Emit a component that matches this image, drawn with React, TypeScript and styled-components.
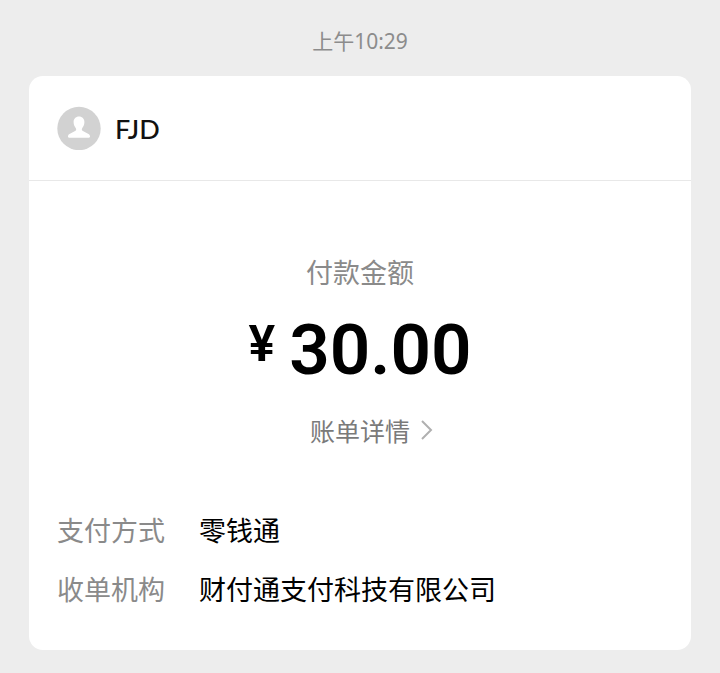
import React from "react";
import styled, { createGlobalStyle } from "styled-components";

const GlobalStyle = createGlobalStyle`
  * { box-sizing: border-box; }
  body {
    margin: 0;
    background: #ededed;
    color: #111;
    font-family: "Noto Sans CJK SC", "Noto Sans", sans-serif;
  }
`;

const Page = styled.main`
  min-height: 100vh;
  padding: 27px 29px 22px;
  display: flex;
  flex-direction: column;
`;

const Timestamp = styled.time`
  text-align: center;
  font-family: "Noto Sans", "Noto Sans CJK SC", sans-serif;
  font-size: 21px;
  line-height: 28px;
  color: #8c8c8c;
  margin-bottom: 21px;
`;

const Card = styled.article`
  background: #fff;
  border-radius: 14px;
`;

const CardHeader = styled.header`
  display: flex;
  align-items: center;
  gap: 14px;
  height: 105px;
  padding: 0 28px;
  border-bottom: 1px solid #e8e8e8;
`;

const Avatar = styled.svg`
  width: 44px;
  height: 44px;
`;

const Payee = styled.h1`
  margin: 0;
  padding-top: 2px;
  font-family: Lato, sans-serif;
  font-size: 27px;
  line-height: 36px;
  font-weight: 500;
`;

const Summary = styled.section`
  display: flex;
  flex-direction: column;
  align-items: center;
  padding: 71px 28px 62px;
`;

const Caption = styled.p`
  margin: 0;
  font-size: 27px;
  line-height: 40px;
  color: #8a8a8a;
`;

const Amount = styled.p`
  margin: 18px 0 0;
  display: flex;
  align-items: flex-start;
  gap: 14px;
  font-family: Roboto, sans-serif;
  font-weight: 600;
  color: #000;
  font-size: 71px;
  line-height: 80px;
`;

const Currency = styled.span`
  font-size: 50px;
  line-height: 68px;
`;

const DetailLink = styled.a`
  margin-top: 22px;
  padding-left: 24px;
  display: flex;
  align-items: center;
  gap: 10px;
  font-size: 25px;
  line-height: 36px;
  color: #7a7a7a;
  text-decoration: none;
`;

const Chevron = styled.svg`
  width: 14px;
  height: 22px;
`;

const Details = styled.dl`
  margin: 0;
  padding: 0 28px 41px;
  display: grid;
  grid-template-columns: 108px 1fr;
  column-gap: 34px;
  row-gap: 19px;
  font-size: 27px;
  line-height: 40px;
`;

const Label = styled.dt`
  color: #8a8a8a;
`;

const Value = styled.dd`
  margin: 0;
  color: #000;
`;

const details = [
  { label: "支付方式", value: "零钱通" },
  { label: "收单机构", value: "财付通支付科技有限公司" },
];

export default function App() {
  return (
    <>
      <GlobalStyle />
      <Page>
        <Timestamp>上午10:29</Timestamp>
        <Card>
          <CardHeader>
            <Avatar viewBox="0 0 44 44" aria-hidden="true">
              <circle cx="22" cy="22.500" r="21.700" fill="#d2d2d2" />
              <path
                fill="#fff"
                d="M22 10.500c-3.300 0-5.400 2.400-5.400 5.500 0 2.800 1 4.500 2.100 6 .8 1.200.6 2.400-.6 3l-5.600 2.900c-1.300.7-1.500 1.700-1.500 2.700 0 .7.400 1.100 1 1.100h20c.6 0 1-.4 1-1.100 0-1-.3-2-1.500-2.700L25.900 25c-1.200-.6-1.400-1.800-.6-3 1.100-1.500 2.100-3.200 2.100-6 0-3.100-2.100-5.500-5.400-5.500z"
              />
            </Avatar>
            <Payee>FJD</Payee>
          </CardHeader>
          <Summary>
            <Caption>付款金额</Caption>
            <Amount>
              <Currency>¥</Currency>
              <span>30.00</span>
            </Amount>
            <DetailLink href="#bill">
              账单详情
              <Chevron viewBox="0 0 14 22" aria-hidden="true">
                <path d="M2 2l9 9-9 9" fill="none" stroke="#b0b0b0" strokeWidth="2" />
              </Chevron>
            </DetailLink>
          </Summary>
          <Details>
            {details.map(({ label, value }) => (
              <React.Fragment key={label}>
                <Label>{label}</Label>
                <Value>{value}</Value>
              </React.Fragment>
            ))}
          </Details>
        </Card>
      </Page>
    </>
  );
}
